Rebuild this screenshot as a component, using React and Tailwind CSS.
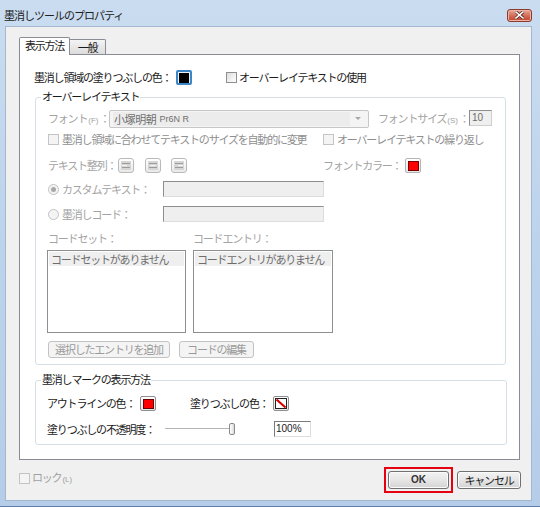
import React from 'react';

const JP = "font-['Noto_Sans_CJK_JP','Noto_Sans_CJK_SC',sans-serif]";
const LAT = "font-['Liberation_Sans',Arial,sans-serif] tracking-normal";
const DIM = 'text-[#a3a3a3]';

function Key({ k }) {
  return <span className={`${LAT} text-[8px] mx-[1px]`}>({k})</span>;
}

function Checkbox({ disabled }) {
  return (
    <span
      className={`shrink-0 w-[11px] h-[11px] border ${
        disabled ? 'border-[#c4c4c4] bg-[#f4f4f4]' : 'border-[#8e8f8f] bg-gradient-to-br from-[#dedede] to-white'
      }`}
    />
  );
}

function Radio({ checked }) {
  return (
    <span className="shrink-0 w-[11px] h-[11px] rounded-full border border-[#c2c2c2] bg-[#f4f4f4] flex items-center justify-center">
      {checked && <span className="w-[5px] h-[5px] rounded-full bg-[#a8a8a8]" />}
    </span>
  );
}

function Swatch({ focus, dim, children }) {
  return (
    <span
      className={`shrink-0 w-[16px] h-[15px] rounded-[2px] flex items-center justify-center ${
        focus ? 'border-2 border-[#3d86c6] bg-[#e9f2fb]' : `border ${dim ? 'border-[#b5b5b5]' : 'border-[#8e8f8f]'} bg-gradient-to-b from-white to-[#e6e6e6]`
      }`}
    >
      {children}
    </span>
  );
}

function AlignIcon({ kind }) {
  const mid = kind === 'left' ? [4, 9] : kind === 'center' ? [5.5, 10.5] : [7, 12];
  return (
    <span className="shrink-0 w-[16px] h-[15px] rounded-[3px] border border-[#b9b9b9] bg-gradient-to-b from-white to-[#e9e9e9] flex items-center justify-center">
      <svg width="14" height="13" viewBox="0 0 14 13">
        <rect x="2" y="2" width="10" height="9" fill="#d6d6d6" />
        <line x1="3" y1="4.5" x2="11" y2="4.5" stroke="#9c9c9c" />
        <line x1={mid[0] - 1} y1="6.5" x2={mid[1] - 1} y2="6.5" stroke="#f4f4f4" />
        <line x1="3" y1="8.5" x2="11" y2="8.5" stroke="#9c9c9c" />
      </svg>
    </span>
  );
}

function GroupBox({ title, className, children }) {
  return (
    <div className={`relative border border-[#d5dfe5] rounded-[3px] ${className}`}>
      <span className="absolute -top-[7px] left-[5px] px-[1px] bg-white leading-none text-[#1b1b1b]">{title}</span>
      {children}
    </div>
  );
}

function PlainButton({ children, className }) {
  return (
    <div
      className={`h-[18px] rounded-[3px] border border-[#707070] bg-gradient-to-b from-[#f3f3f3] via-[#e6e6e6] to-[#d3d3d3] flex items-center justify-center shadow-[inset_0_0_0_1px_#fbfbfb] ${className}`}
    >
      {children}
    </div>
  );
}

function CloseButton() {
  return (
    <div className="w-[25px] h-[13px] rounded-[3px] border border-[#8c3a2c] bg-gradient-to-b from-[#e9a99b] via-[#d36f5a] to-[#c2412b] flex items-center justify-center shadow-[inset_0_0_0_1px_#eeb4a6]">
      <svg width="9" height="8" viewBox="0 0 9 8">
        <path d="M1 1 L8 7 M8 1 L1 7" stroke="#4b211a" strokeWidth="3" strokeLinecap="square" />
        <path d="M1 1 L8 7 M8 1 L1 7" stroke="#ffffff" strokeWidth="1.6" strokeLinecap="square" />
      </svg>
    </div>
  );
}

function OverlayText() {
  return (
    <GroupBox title="オーバーレイテキスト" className="ml-[15px] mt-[12px] w-[471px] h-[268px] pt-[12px] pl-[12px]">
      {/* フォント */}
      <div className="flex items-center h-[18px]">
        <span className={`w-[61px] ${DIM}`}>フォント<Key k="F" />：</span>
        <div className="w-[260px] h-[18px] rounded-[2px] border border-[#c6c6c6] bg-[#f4f4f4] flex items-center pl-[3px] pr-[4px]">
          <div className="flex-1 h-[14px] bg-[#ececec] flex items-center pl-[1px]">
            <span className="text-[#707070] tracking-[-0.4px]">小塚明朝</span>
            <span className={`${LAT} text-[9px] ml-[3px] text-[#707070]`}>Pr6N R</span>
          </div>
          <svg width="12" height="8" viewBox="0 0 12 8" className="ml-[2px]">
            <path d="M3 2 H9 L6 5 Z" fill="#a8a8a8" />
          </svg>
        </div>
        <span className={`ml-[9px] w-[91px] ${DIM}`}>フォントサイズ<Key k="S" />：</span>
        <div className={`self-start w-[23px] h-[16px] border border-[#cfcfcf] border-t-[#8e8e8e] border-l-[#8e8e8e] bg-[#efefef] ${LAT} text-[10px] text-[#6d6d6d] flex items-center pl-[2px]`}>10</div>
      </div>

      <div className="flex items-center h-[14px] mt-[4px]">
        <div className="w-[275px] flex items-center gap-[3px]">
          <Checkbox disabled />
          <span className="text-[#8f8f8f]">墨消し領域に合わせてテキストのサイズを自動的に変更</span>
        </div>
        <div className="flex items-center gap-[3px]">
          <Checkbox disabled />
          <span className="text-[#8f8f8f]">オーバーレイテキストの繰り返し</span>
        </div>
      </div>

      <div className="flex items-center h-[15px] mt-[12px]">
        <span className={`w-[70px] ${DIM}`}>テキスト整列：</span>
        <AlignIcon kind="left" />
        <span className="ml-[11px]"><AlignIcon kind="center" /></span>
        <span className="ml-[10px]"><AlignIcon kind="right" /></span>
        <span className={`ml-[136px] w-[82px] ${DIM}`}>フォントカラー：</span>
        <Swatch dim>
          <span className="w-[11px] h-[10px] bg-[#ff0000] border border-[#7a0000]" />
        </Swatch>
      </div>

      <div className="flex items-center h-[16px] mt-[8px]">
        <div className="w-[115px] flex items-center gap-[3px]">
          <Radio checked />
          <span className={DIM}>カスタムテキスト：</span>
        </div>
        <div className="w-[161px] h-[16px] border border-[#dcdcdc] border-t-[#8e8e8e] border-l-[#8e8e8e] bg-[#efefef]" />
      </div>

      <div className="flex items-center h-[16px] mt-[9px]">
        <div className="w-[115px] flex items-center gap-[3px]">
          <Radio />
          <span className={DIM}>墨消しコード：</span>
        </div>
        <div className="w-[161px] h-[16px] border border-[#dcdcdc] border-t-[#8e8e8e] border-l-[#8e8e8e] bg-[#efefef]" />
      </div>

      <div className="flex items-center h-[14px] mt-[9px]">
        <span className={`w-[145px] ${DIM}`}>コードセット：</span>
        <span className={DIM}>コードエントリ：</span>
      </div>

      <div className="flex h-[83px] mt-[5px] -ml-[1px]">
        <div className="w-[139px] border border-[#8e8f90] bg-white p-[1px]">
          <div className="h-[14px] bg-[#efefef] flex items-center pl-[2px] text-[#6d6d6d]">コードセットがありません</div>
        </div>
        <div className="ml-[7px] w-[140px] border border-[#8e8f90] bg-white p-[1px]">
          <div className="h-[14px] bg-[#efefef] flex items-center pl-[2px] text-[#6d6d6d]">コードエントリがありません</div>
        </div>
      </div>

      <div className="flex h-[17px] mt-[8px]">
        <div className="w-[122px] rounded-[3px] border border-[#c3c3c3] bg-[#f4f4f4] flex items-center justify-center text-[#9a9a9a]">選択したエントリを追加</div>
        <div className="ml-[9px] w-[75px] rounded-[3px] border border-[#c3c3c3] bg-[#f4f4f4] flex items-center justify-center text-[#9a9a9a]">コードの編集</div>
      </div>
    </GroupBox>
  );
}

function MarkSettings() {
  return (
    <GroupBox title="墨消しマークの表示方法" className="ml-[15px] mt-[15px] w-[472px] h-[65px] pt-[15px] pl-[11px]">
      <div className="flex items-center h-[15px]">
        <span className="w-[93px]">アウトラインの色：</span>
        <Swatch>
          <span className="w-[11px] h-[10px] bg-[#ff0000] border border-[#6b0000]" />
        </Swatch>
        <span className="ml-[34px] w-[83px]">塗りつぶしの色：</span>
        <Swatch>
          <svg width="12" height="11" viewBox="0 0 12 11">
            <rect x="0.5" y="0.5" width="11" height="10" fill="#ffffff" stroke="#222" />
            <path d="M1.5 1.5 L10.5 9.5" stroke="#d40000" strokeWidth="2.2" />
          </svg>
        </Swatch>
      </div>
      <div className="flex items-center h-[16px] mt-[10px]">
        <span className="w-[118px]">塗りつぶしの不透明度：</span>
        <div className="w-[70px] flex items-center">
          <div className="w-[64px] h-[2px] border-t border-[#b5b5b5] border-b border-b-white" />
          <div className="w-[6px] h-[12px] rounded-[2px] border border-[#8a8a8a] bg-gradient-to-r from-white to-[#dcdcdc]" />
        </div>
        <div className={`ml-[39px] w-[37px] h-[16px] border border-[#dcdcdc] border-t-[#7a7a7a] border-l-[#7a7a7a] bg-white ${LAT} text-[10px] flex items-center pl-[1px]`}>100%</div>
      </div>
    </GroupBox>
  );
}

export default function App() {
  return (
    <div className={`w-[540px] h-[507px] flex flex-col bg-gradient-to-b from-[#cadcf0] via-[#bcd3ec] to-[#b5cde9] border-b border-[#5b7fa8] ${JP} text-[11px] tracking-[-1.2px] leading-none whitespace-nowrap text-[#1b1b1b]`}>
      {/* title bar */}
      <div className="h-[26px] pt-[4px] pl-[4px] pr-[8px] flex items-center justify-between">
        <span className="text-[11px] tracking-[-1px] text-[#202020]">墨消しツールのプロパティ</span>
        <CloseButton />
      </div>

      {/* client area */}
      <div className="ml-[5px] mr-[8px] mb-[5px] flex-1 bg-[#f0f0f0] border border-[#a3b8cf] flex flex-col">
        <div className="ml-[13px] mt-[10px] h-[17px] flex items-end">
          <div className="relative z-10 -mb-[1px] w-[51px] h-[18px] bg-white border border-b-0 border-[#898c95] rounded-t-[2px] flex items-center justify-center pb-[2px]">表示方法</div>
          <div className="w-[36px] h-[15px] border border-l-0 border-b-0 border-[#898c95] rounded-tr-[2px] bg-gradient-to-b from-[#f4f4f4] to-[#dcdcdc] flex items-center justify-center">一般</div>
        </div>

        <div className="ml-[13px] w-[501px] h-[406px] bg-white border border-[#898c95]">
          <div className="flex items-center h-[15px] mt-[15px] pl-[14px]">
            <span className="w-[142px]">墨消し領域の塗りつぶしの色：</span>
            <Swatch focus>
              <span className="w-[10px] h-[10px] bg-black" />
            </Swatch>
            <span className="ml-[34px] flex items-center gap-[2px]">
              <Checkbox />
              <span>オーバーレイテキストの使用</span>
            </span>
          </div>

          <OverlayText />
          <MarkSettings />
        </div>

        <div className="flex-1 flex items-center pl-[13px] pr-[10px]">
          <div className="flex items-center gap-[2px] mb-[4px] text-[#a0a0a0]">
            <Checkbox disabled />
            <span>ロック<Key k="L" /></span>
          </div>
          <div className="ml-auto border-2 border-[#e50012] p-[2px]">
            <PlainButton className={`w-[61px] ${LAT} text-[10px] font-bold text-[#333]`}>OK</PlainButton>
          </div>
          <PlainButton className="ml-[4px] w-[64px]">キャンセル</PlainButton>
        </div>
      </div>
    </div>
  );
}
